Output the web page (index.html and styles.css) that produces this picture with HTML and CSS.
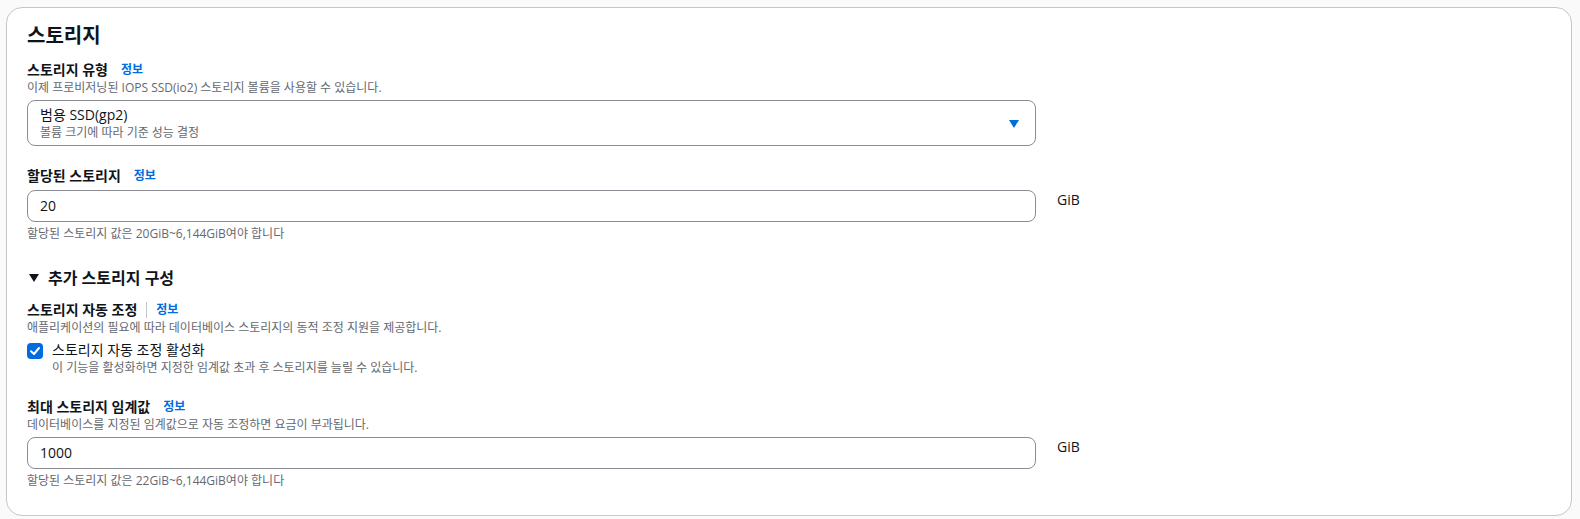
FILE: index.html
```html
<!DOCTYPE html>
<html lang="ko">
<head>
<meta charset="utf-8">
<title>스토리지</title>
<link rel="stylesheet" href="styles.css">
</head>
<body>
<div class="card">
  <h2 class="title">스토리지</h2>

  <div class="field first">
    <div class="label-row"><span class="label">스토리지 유형</span><a class="info">정보</a></div>
    <div class="desc">이제 프로비저닝된 IOPS SSD(io2) 스토리지 볼륨을 사용할 수 있습니다.</div>
    <div class="control-row">
      <div class="select">
        <div class="select-text">
          <div class="select-main">범용 SSD(gp2)</div>
          <div class="select-sub">볼륨 크기에 따라 기준 성능 결정</div>
        </div>
        <svg class="caret" width="10" height="8" viewBox="0 0 10 8"><path d="M0 0 H10 L5 8 Z" fill="#006ce0"/></svg>
      </div>
    </div>
  </div>

  <div class="field gap21">
    <div class="label-row"><span class="label">할당된 스토리지</span><a class="info">정보</a></div>
    <div class="control-row">
      <div class="input">20</div>
      <span class="unit">GiB</span>
    </div>
    <div class="hint">할당된 스토리지 값은 20GiB~6,144GiB여야 합니다</div>
  </div>

  <div class="section-head">
    <svg class="tri" width="10" height="8" viewBox="0 0 10 8"><path d="M0 0 H10 L5 8 Z" fill="#0f141a"/></svg>
    <span>추가 스토리지 구성</span>
  </div>

  <div class="field gap13">
    <div class="label-row"><span class="label">스토리지 자동 조정</span><span class="divider"></span><a class="info tight">정보</a></div>
    <div class="desc">애플리케이션의 필요에 따라 데이터베이스 스토리지의 동적 조정 지원을 제공합니다.</div>
    <div class="check-row">
      <span class="checkbox">
        <svg width="16" height="16" viewBox="0 0 16 16"><path d="M4 8.2 L7 11 L12 5" fill="none" stroke="#fff" stroke-width="2" stroke-linecap="round" stroke-linejoin="round"/></svg>
      </span>
      <div class="check-text">
        <div class="check-label">스토리지 자동 조정 활성화</div>
        <div class="desc">이 기능을 활성화하면 지정한 임계값 초과 후 스토리지를 늘릴 수 있습니다.</div>
      </div>
    </div>
  </div>

  <div class="field gap22">
    <div class="label-row"><span class="label">최대 스토리지 임계값</span><a class="info">정보</a></div>
    <div class="desc">데이터베이스를 지정된 임계값으로 자동 조정하면 요금이 부과됩니다.</div>
    <div class="control-row">
      <div class="input">1000</div>
      <span class="unit">GiB</span>
    </div>
    <div class="hint">할당된 스토리지 값은 22GiB~6,144GiB여야 합니다</div>
  </div>
</div>
</body>
</html>
```

FILE: styles.css
```css
* { box-sizing: border-box; }
html, body { margin: 0; padding: 0; }
body {
  background: #fafafa;
  font-family: "Open Sans", "Noto Sans CJK KR", sans-serif;
  color: #0f141a;
  padding: 7px 8px 4px 6px;
}
.card {
  background: #fff;
  border: 1px solid #c6c6cd;
  border-radius: 16px;
  padding: 16px 20px 26px;
}
.title {
  margin: 0;
  font-size: 20px;
  line-height: 24px;
  font-weight: 700;
}
.field.first { margin-top: 13px; }
.field.gap21 { margin-top: 21px; }
.field.gap22 { margin-top: 22px; }
.field.gap13 { margin-top: 13px; }
.label-row {
  display: flex;
  align-items: center;
  height: 18px;
}
.label {
  font-size: 14px;
  line-height: 18px;
  font-weight: 700;
}
.info {
  font-size: 12px;
  font-weight: 700;
  color: #006ce0;
  margin-left: 13px;
  line-height: 18px;
}
.info.tight { margin-left: 9px; }
.divider {
  width: 1px;
  height: 16px;
  background: #c6c6cd;
  margin-left: 9px;
}
.desc, .hint {
  font-size: 12px;
  line-height: 16px;
  color: #656871;
}
.desc { margin-top: 1px; }
.hint { margin-top: 4px; }
.control-row {
  display: flex;
  align-items: flex-start;
  gap: 21px;
  margin-top: 4px;
}
.label-row + .control-row { margin-top: 5px; }
.select {
  width: 1009px;
  height: 46px;
  border: 1px solid #8c8c94;
  border-radius: 8px;
  padding: 5px 16px 4px 12px;
  display: flex;
  align-items: center;
  justify-content: space-between;
}
.select-text { align-self: flex-start; }
.select-main { font-size: 14px; line-height: 18px; }
.select-sub { font-size: 12px; line-height: 16px; color: #656871; margin-top: 1px; }
.caret { margin-top: 1px; }
.input {
  width: 1009px;
  height: 32px;
  border: 1px solid #8c8c94;
  border-radius: 8px;
  padding: 0 12px;
  font-size: 14px;
  line-height: 30px;
}
.unit {
  font-size: 14px;
  line-height: 18px;
  padding-top: 1px;
}
.section-head {
  margin-top: 26px;
  display: flex;
  align-items: center;
  height: 20px;
  font-size: 16px;
  font-weight: 700;
  line-height: 20px;
}
.tri { margin-left: 2px; margin-right: 9px; }
.check-row {
  display: flex;
  align-items: flex-start;
  margin-top: 5px;
}
.checkbox {
  width: 16px;
  height: 16px;
  border-radius: 4px;
  background: #006ce0;
  margin-top: 2px;
  margin-right: 9px;
  display: flex;
}
.check-label { font-size: 14px; line-height: 18px; }
.check-text .desc { margin-top: 1px; }
```
